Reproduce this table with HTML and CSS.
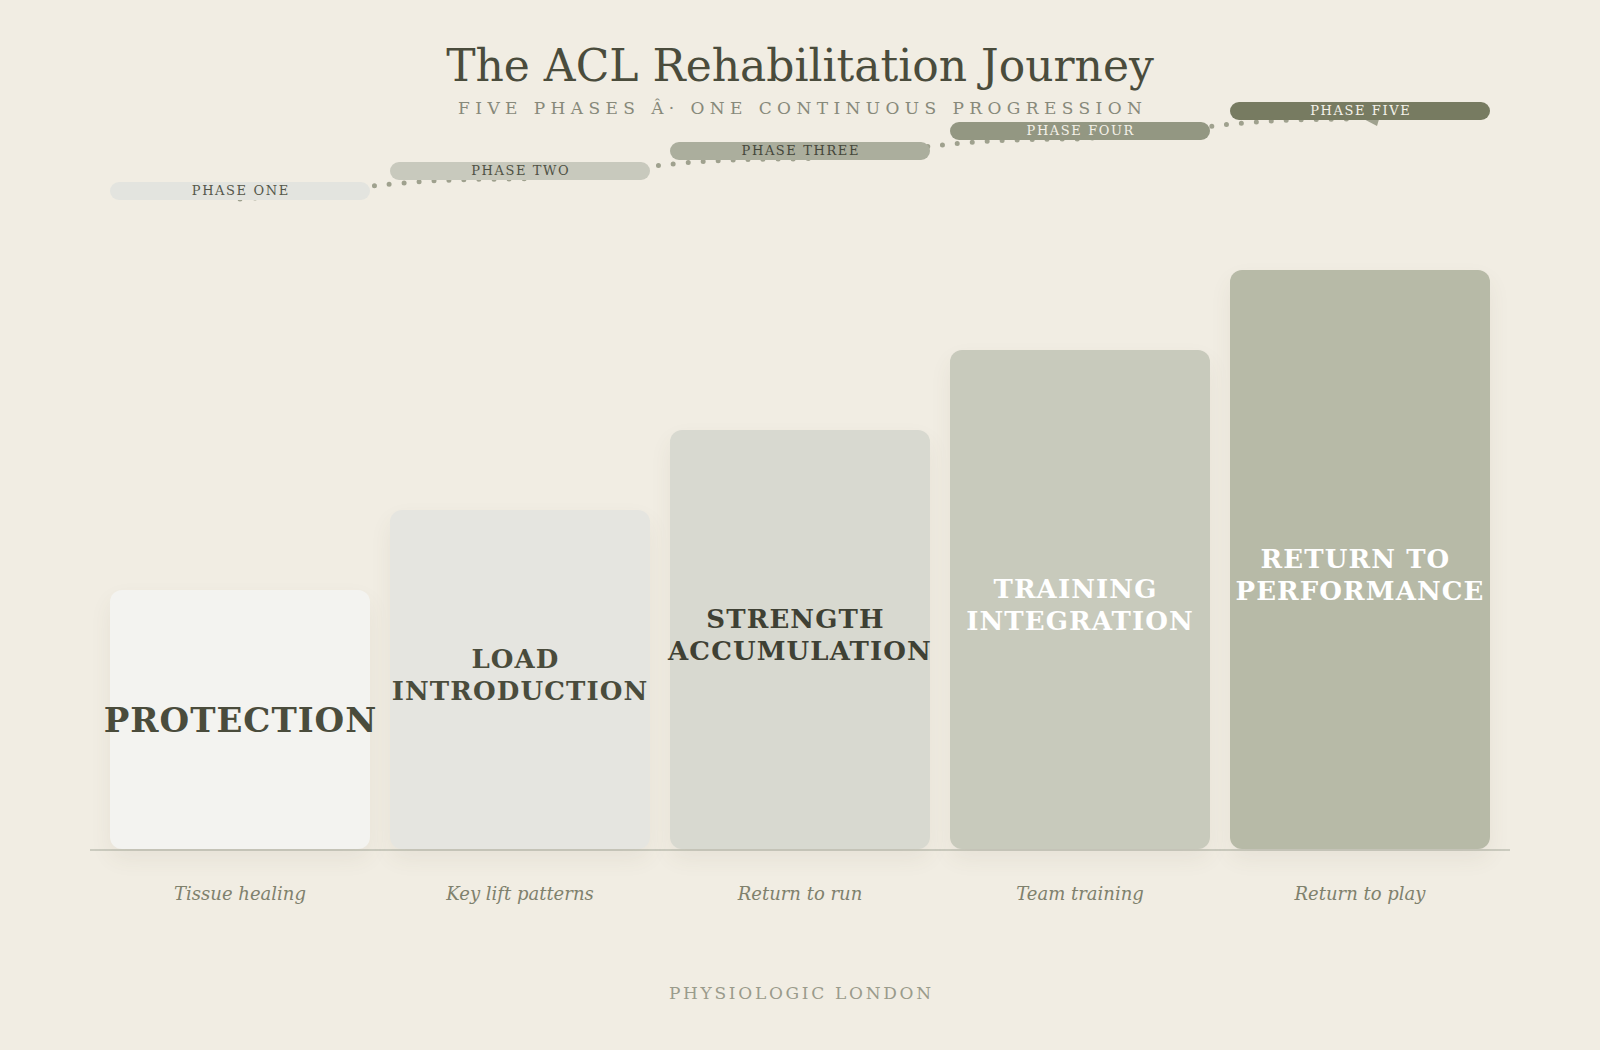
FILE: index.html
```html
<!DOCTYPE html>
<html lang="en">
<head>
<meta charset="utf-8">
<title>The ACL Rehabilitation Journey</title>
<link rel="stylesheet" href="styles.css">
</head>
<body>
<div class="page">
  <header class="header">
    <h1 class="title">The ACL Rehabilitation Journey</h1>
    <p class="subtitle">FIVE PHASES Â· ONE CONTINUOUS PROGRESSION</p>
  </header>

  <section class="chart">
    <div class="pills">
      <svg class="trail" width="1420" height="98" viewBox="0 0 1420 98" aria-hidden="true">
        <path class="trail-path" d="M150,97 C290,87 290,77 430,77 C570,67 570,57 710,57 C850,47 850,37 990,37 C1130,27 1130,17 1270,17"/>
        <polygon class="trail-arrow" points="1268,14 1290,14 1287,24"/>
      </svg>
      <div class="pill pill-1">PHASE ONE</div>
      <div class="pill pill-2">PHASE TWO</div>
      <div class="pill pill-3">PHASE THREE</div>
      <div class="pill pill-4">PHASE FOUR</div>
      <div class="pill pill-5">PHASE FIVE</div>
    </div>

    <div class="bars">
      <div class="bar bar-1" style="height:259px"><div class="label">PROTECTION</div></div>
      <div class="bar bar-2" style="height:339px"><div class="label">LOAD <br>INTRODUCTION</div></div>
      <div class="bar bar-3" style="height:419px"><div class="label">STRENGTH <br>ACCUMULATION</div></div>
      <div class="bar bar-4" style="height:499px"><div class="label">TRAINING <br>INTEGRATION</div></div>
      <div class="bar bar-5" style="height:579px"><div class="label">RETURN TO <br>PERFORMANCE</div></div>
    </div>

    <div class="axis"></div>

    <div class="captions">
      <div class="caption">Tissue healing</div>
      <div class="caption">Key lift patterns</div>
      <div class="caption">Return to run</div>
      <div class="caption">Team training</div>
      <div class="caption">Return to play</div>
    </div>
  </section>

  <footer class="footer">PHYSIOLOGIC LONDON</footer>
</div>
</body>
</html>
```

FILE: styles.css
```css
html, body {
  margin: 0;
  padding: 0;
}

body {
  background: #f1ede3;
  font-family: "DejaVu Serif", "Liberation Serif", serif;
  color: #4a4c3c;
}

.page {
  width: 1600px;
  height: 1050px;
  overflow: hidden;
}

/* ---------- header ---------- */
.header {
  padding-top: 41px;
  text-align: center;
}

.title {
  margin: 0;
  font-size: 44px;
  line-height: 50px;
  font-weight: normal;
  color: #4a4c3c;
}

.subtitle {
  margin: 7px 0 0;
  font-size: 17px;
  line-height: 20px;
  letter-spacing: 5.4px;
  text-indent: 5.4px;
  color: #87897a;
}

/* ---------- chart ---------- */
.chart {
  width: 1420px;
  margin: -16px auto 0;
}

.pills {
  position: relative;
  display: grid;
  grid-template-columns: repeat(5, 260px);
  column-gap: 20px;
  padding: 0 20px;
  height: 98px;
  align-items: start;
}

.trail {
  position: absolute;
  left: 0;
  top: 0;
  overflow: visible;
  z-index: 0;
}

.trail-path {
  fill: none;
  stroke: #9fa18e;
  stroke-width: 5;
  stroke-linecap: round;
  stroke-dasharray: 0 15;
}

.trail-arrow {
  fill: #9fa18e;
}

.pill {
  position: relative;
  z-index: 1;
  height: 18px;
  line-height: 18px;
  border-radius: 9px;
  text-align: center;
  font-size: 13px;
  letter-spacing: 1.6px;
  text-indent: 1.6px;
}

.pill-1 { margin-top: 80px; background: #e3e4df; color: #55574a; }
.pill-2 { margin-top: 60px; background: #c8c9bd; color: #4f5144; }
.pill-3 { margin-top: 40px; background: #abae9d; color: #45473a; }
.pill-4 { margin-top: 20px; background: #939782; color: #f3f1e8; }
.pill-5 { margin-top: 0;    background: #777b61; color: #f4f2ea; }

.bars {
  display: grid;
  grid-template-columns: repeat(5, 260px);
  column-gap: 20px;
  padding: 0 20px;
  height: 649px;
  align-items: end;
}

.bar {
  border-radius: 12px;
  display: flex;
  align-items: center;
  justify-content: center;
  box-shadow: 0 10px 22px rgba(95, 90, 60, 0.07);
}

.bar-1 { background: #f3f3f0; }
.bar-2 { background: #e5e5e0; }
.bar-3 { background: #d8d9d0; }
.bar-4 { background: #c8cabc; }
.bar-5 { background: #b7baa7; }

.label {
  font-weight: bold;
  font-size: 26px;
  line-height: 32px;
  letter-spacing: 1.1px;
  text-indent: 1.1px;
  text-align: center;
  white-space: pre;
  flex: none;
}

.bar-1 .label { font-size: 34px; line-height: 40px; letter-spacing: 1px; text-indent: 1px; color: #4a4c3c; }
.bar-2 .label { color: #4a4c3c; transform: translateY(-5px); }
.bar-3 .label { color: #3f4134; transform: translateY(-5px); }
.bar-4 .label { color: #ffffff; transform: translateY(5px); }
.bar-5 .label { color: #ffffff; transform: translateY(15px); }

.axis {
  height: 2px;
  background: #cbcbbf;
}

.captions {
  display: grid;
  grid-template-columns: repeat(5, 260px);
  column-gap: 20px;
  padding: 0 20px;
  margin-top: 31px;
}

.caption {
  text-align: center;
  font-style: italic;
  font-size: 18px;
  line-height: 24px;
  color: #7f816d;
}

/* ---------- footer ---------- */
.footer {
  margin-top: 77px;
  text-align: center;
  font-size: 17px;
  line-height: 20px;
  letter-spacing: 2.7px;
  text-indent: 2.7px;
  color: #9a9b8b;
}
```
